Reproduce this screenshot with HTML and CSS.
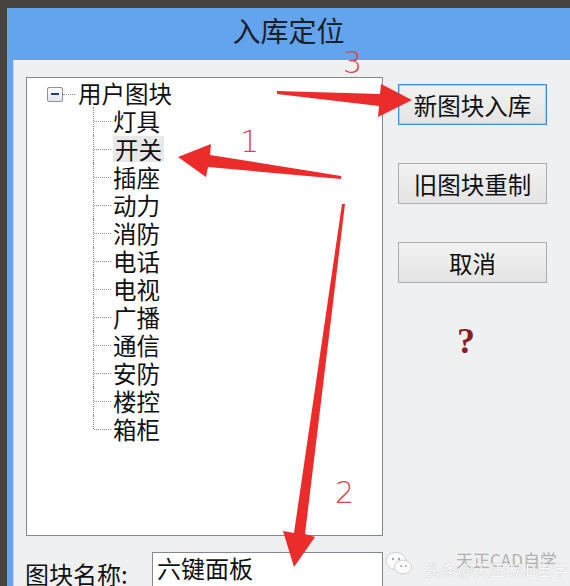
FILE: index.html
```html
<!DOCTYPE html>
<html lang="zh-CN">
<head>
    <meta charset="UTF-8">
    <meta name="viewport" content="width=device-width, initial-scale=1.0">
    <title>入库定位</title>
    <link rel="stylesheet" href="styles.css">
</head>
<body>

<div class="screen">
    <div class="window">
        <div class="titlebar">入库定位</div>
        <div class="frame">
            <div class="dialog">
                <div class="main">
                    <div class="tree">
                        <div class="root">
                            <span class="expander"></span>
                            <span class="dots"></span>
                            <span class="label">用户图块</span>
                        </div>
                        <div class="children">
                            <div class="node"><span class="label">灯具</span></div>
                            <div class="node"><span class="label sel">开关</span></div>
                            <div class="node"><span class="label">插座</span></div>
                            <div class="node"><span class="label">动力</span></div>
                            <div class="node"><span class="label">消防</span></div>
                            <div class="node"><span class="label">电话</span></div>
                            <div class="node"><span class="label">电视</span></div>
                            <div class="node"><span class="label">广播</span></div>
                            <div class="node"><span class="label">通信</span></div>
                            <div class="node"><span class="label">安防</span></div>
                            <div class="node"><span class="label">楼控</span></div>
                            <div class="node"><span class="label">箱柜</span></div>
                        </div>
                    </div>

                    <div class="actions">
                        <button class="btn focused">新图块入库</button>
                        <button class="btn">旧图块重制</button>
                        <button class="btn">取消</button>
                        <div class="help">?</div>
                    </div>
                </div>

                <div class="name-row">
                    <label class="name-label">图块名称:</label>
                    <div class="name-field">六键面板</div>
                </div>
            </div>
        </div>
    </div>

    <!-- red annotation arrows drawn over the screenshot -->
    <svg class="marks" width="570" height="586" viewBox="0 0 570 586">
        <polygon points="277,91 380,94 381,84 412,100 378,117 379,106 277,94" />
        <polygon points="178,157 211,144 210,155 341,176 341,179 208,167 206,177" />
        <polygon points="342,204 345,204 305,534 315,537 294,567 283,531 294,533" />
        <text x="343" y="73">3</text>
        <text x="240" y="152">1</text>
        <text x="335" y="503">2</text>
    </svg>

    <div class="watermark">
        <svg class="wx" width="30" height="30" viewBox="0 0 30 30">
            <ellipse cx="12" cy="12" rx="10" ry="8.5" fill="#fff" stroke="#c9c9c9" stroke-width="1" />
            <ellipse cx="19" cy="18" rx="8.5" ry="7" fill="#fff" stroke="#c9c9c9" stroke-width="1" />
            <circle cx="9" cy="10" r="1.2" fill="#9a9a9a" />
            <circle cx="15" cy="10" r="1.2" fill="#9a9a9a" />
            <circle cx="17" cy="17" r="1" fill="#9a9a9a" />
            <circle cx="22" cy="17" r="1" fill="#9a9a9a" />
        </svg>
        <div class="wm-text">
            <span class="wm-back">天正CAD自学</span>
            <span class="wm-front">头条@天正CAD自学</span>
        </div>
    </div>
</div>

</body>
</html>
```

FILE: styles.css
```css
body {
    margin: 0;
    background-color: #46423d;
    overflow: hidden;
}
.screen {
    position: relative;
    width: 570px;
    height: 586px;
    box-sizing: border-box;
    padding: 8px 0 0 7px;
    background-color: #46423d;
    display: flex;
    overflow: hidden;
    font-family: "Noto Sans CJK SC", "Noto Sans", sans-serif;
}
.window {
    flex: 1;
    display: flex;
    flex-direction: column;
    background-color: #63a4ee;
}
.titlebar {
    height: 52px;
    box-sizing: border-box;
    padding-bottom: 8px;
    line-height: 44px;
    text-align: center;
    font-size: 28px;
    color: #1b1f2a;
}
.frame {
    flex: 1;
    display: flex;
    padding-left: 6px;
}
.dialog {
    flex: 1;
    background-color: #eff0f2;
    border-left: 1px solid #d5dbe3;
    padding: 17px 0 0 12px;
}
.main {
    display: flex;
    gap: 15px;
}

/* tree view */
.tree {
    width: 357px;
    height: 459px;
    box-sizing: border-box;
    border: 1px solid #828790;
    background-color: #fff;
    padding-top: 1px;
    color: #111;
    font-size: 23.5px;
}
.root, .node {
    height: 28px;
    display: flex;
    align-items: center;
}
.root {
    padding-left: 20px;
}
.label {
    display: inline-block;
    height: 26px;
    line-height: 26px;
    white-space: nowrap;
}
.expander {
    position: relative;
    width: 16px;
    height: 15px;
    margin-top: 2px;
    box-sizing: border-box;
    border: 1px solid #8f9194;
    border-radius: 2px;
    background: linear-gradient(#ffffff, #dfe3e9);
}
.expander::after {
    content: "";
    position: absolute;
    left: 3px;
    top: 5px;
    width: 8px;
    height: 2px;
    background-color: #25406a;
}
.dots {
    width: 12px;
    margin: 2px 3px 0 0;
    border-top: 1px dotted #8a8a8a;
}
.children {
    margin-left: 66px;
}
.node {
    position: relative;
    padding-left: 20px;
}
.node::before {
    content: "";
    position: absolute;
    left: 0;
    top: 0;
    bottom: 0;
    border-left: 1px dotted #8a8a8a;
}
.node:last-child::before {
    bottom: 50%;
}
.node::after {
    content: "";
    position: absolute;
    left: 1px;
    top: 50%;
    width: 17px;
    border-top: 1px dotted #8a8a8a;
}
.sel {
    background-color: #e8e8e8;
    padding: 0 2px;
}

/* right column */
.actions {
    width: 149px;
    padding-top: 7px;
    display: flex;
    flex-direction: column;
}
.btn {
    height: 41px;
    margin-bottom: 38px;
    box-sizing: border-box;
    border: 1px solid #adadad;
    background: linear-gradient(#f2f2f2, #e4e4e4);
    font-family: "Noto Sans CJK SC", "Noto Sans", sans-serif;
    font-size: 23.5px;
    color: #111;
    padding: 0;
    line-height: 38px;
}
.btn.focused {
    border-color: #3c8de0;
    box-shadow: inset 0 0 0 1px #a9cdf2;
}
.help {
    margin: 0 0 0 59px;
    font-family: "Liberation Serif", serif;
    font-weight: bold;
    font-size: 36px;
    line-height: 40px;
    color: #8b1c1f;
}

/* name row */
.name-row {
    display: flex;
    margin-top: 16px;
}
.name-label {
    width: 127px;
    margin: 8px 0 0 -1px;
    font-size: 24px;
    line-height: 28px;
    color: #111;
}
.name-field {
    width: 231px;
    height: 40px;
    box-sizing: border-box;
    border: 1px solid #828790;
    background-color: #fff;
    padding: 1px 0 0 4px;
    font-size: 24px;
    line-height: 28px;
    color: #111;
}

/* overlay annotations */
.marks {
    position: absolute;
    left: 0;
    top: 0;
    pointer-events: none;
}
.marks polygon {
    fill: #ec2b2b;
}
.marks text {
    font-family: "DejaVu Sans", sans-serif;
    font-weight: 300;
    font-size: 30px;
    fill: #d9434a;
}
.watermark {
    position: absolute;
    left: 384px;
    top: 549px;
    display: flex;
    align-items: center;
    gap: 4px;
    opacity: 0.85;
}
.wm-text {
    position: relative;
    width: 130px;
    height: 30px;
    font-family: "Noto Sans CJK SC", sans-serif;
}
.wm-back {
    position: absolute;
    left: 38px;
    top: -2px;
    font-size: 17px;
    color: #a8a8a8;
    white-space: nowrap;
}
.wm-front {
    position: absolute;
    left: 8px;
    top: 8px;
    font-size: 16px;
    color: #fff;
    white-space: nowrap;
    text-shadow: 0 0 1px #999;
}
```
